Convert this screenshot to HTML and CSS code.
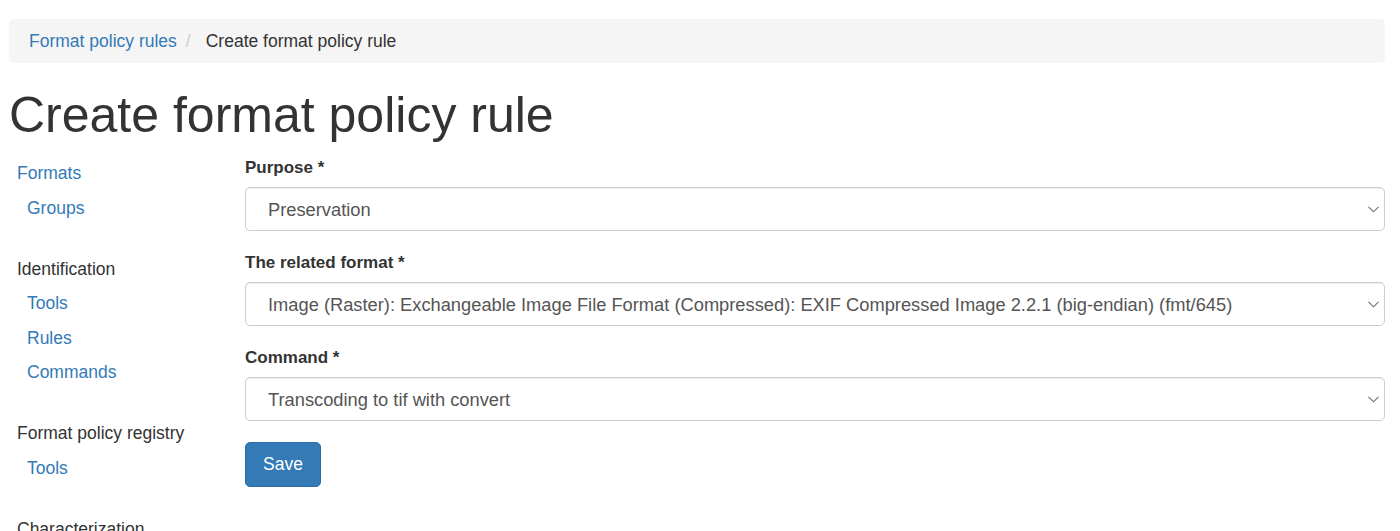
FILE: index.html
```html
<!DOCTYPE html>
<html lang="en">
<head>
<meta charset="utf-8">
<title>Create format policy rule</title>
<link rel="stylesheet" href="styles.css">
</head>
<body>
<div class="page">
  <nav class="breadcrumb">
    <a href="#" class="crumb-link">Format policy rules</a><span class="crumb-sep">/</span><span class="crumb-active">Create format policy rule</span>
  </nav>
  <h1 class="title">Create format policy rule</h1>
  <div class="layout">
    <aside class="sidebar">
      <ul class="nav">
        <li class="nav-group">
          <a href="#" class="nav-top nav-link">Formats</a>
          <ul class="nav-sub">
            <li><a href="#" class="nav-link">Groups</a></li>
          </ul>
        </li>
        <li class="nav-group">
          <span class="nav-top">Identification</span>
          <ul class="nav-sub">
            <li><a href="#" class="nav-link">Tools</a></li>
            <li><a href="#" class="nav-link">Rules</a></li>
            <li><a href="#" class="nav-link">Commands</a></li>
          </ul>
        </li>
        <li class="nav-group">
          <span class="nav-top">Format policy registry</span>
          <ul class="nav-sub">
            <li><a href="#" class="nav-link">Tools</a></li>
          </ul>
        </li>
        <li class="nav-group">
          <span class="nav-top">Characterization</span>
        </li>
      </ul>
    </aside>
    <form class="form">
      <div class="form-group">
        <label class="label" for="purpose">Purpose *</label>
        <div class="select-wrap">
          <select id="purpose" class="select">
            <option>Preservation</option>
          </select>
          <svg class="chevron" width="11" height="7" viewBox="0 0 11 7"><path d="M0.5 0.8 L5.5 5.8 L10.5 0.8" fill="none" stroke="#6f6f6f" stroke-width="1.1"/></svg>
        </div>
      </div>
      <div class="form-group">
        <label class="label" for="format">The related format *</label>
        <div class="select-wrap">
          <select id="format" class="select">
            <option>Image (Raster): Exchangeable Image File Format (Compressed): EXIF Compressed Image 2.2.1 (big-endian) (fmt/645)</option>
          </select>
          <svg class="chevron" width="11" height="7" viewBox="0 0 11 7"><path d="M0.5 0.8 L5.5 5.8 L10.5 0.8" fill="none" stroke="#6f6f6f" stroke-width="1.1"/></svg>
        </div>
      </div>
      <div class="form-group">
        <label class="label" for="command">Command *</label>
        <div class="select-wrap">
          <select id="command" class="select">
            <option>Transcoding to tif with convert</option>
          </select>
          <svg class="chevron" width="11" height="7" viewBox="0 0 11 7"><path d="M0.5 0.8 L5.5 5.8 L10.5 0.8" fill="none" stroke="#6f6f6f" stroke-width="1.1"/></svg>
        </div>
      </div>
      <div class="actions">
        <button type="button" class="btn-primary">Save</button>
      </div>
    </form>
  </div>
</div>
</body>
</html>
```

FILE: styles.css
```css
html, body {
  margin: 0;
  padding: 0;
  background: #ffffff;
}

body {
  font-family: "Liberation Sans", Arial, Helvetica, sans-serif;
  font-size: 17.5px;
  line-height: 1.42857;
  color: #333333;
  overflow: hidden;
}

.page {
  padding: 19px 15px 0 9px;
}

.breadcrumb {
  display: flex;
  align-items: center;
  height: 44px;
  padding: 0 20px;
  background: #f5f5f5;
  border-radius: 5px;
}

.crumb-link {
  color: #337ab7;
  text-decoration: none;
}

.crumb-sep {
  color: #cccccc;
  margin: 0 15px 0 9px;
}

.crumb-active {
  color: #333333;
}

.title {
  margin: 25px 0 13px 0;
  font-size: 50px;
  line-height: 1.1;
  font-weight: 400;
  color: #333333;
  letter-spacing: 0;
}

.layout {
  display: grid;
  grid-template-columns: 236px 1fr;
}

.sidebar {
  padding-left: 8px;
}

.nav, .nav-sub {
  list-style: none;
  margin: 0;
  padding: 0;
}

.nav-group {
  margin-bottom: 26.5px;
}

.nav-top {
  display: block;
  line-height: 34.5px;
  color: #333333;
}

.nav-sub li {
  line-height: 34.5px;
  padding-left: 10px;
}

.nav-link {
  color: #337ab7;
  text-decoration: none;
}

.form-group {
  margin-bottom: 20px;
}

.label {
  display: block;
  font-weight: 700;
  font-size: 17px;
  line-height: 24px;
  margin-bottom: 7px;
  color: #333333;
}

.select-wrap {
  position: relative;
}

.select {
  display: block;
  width: 100%;
  height: 44px;
  margin: 0;
  padding: 1px 40px 0 22px;
  font-family: inherit;
  font-size: 18.3px;
  color: #555555;
  background: #ffffff;
  border: 1px solid #cccccc;
  border-radius: 5px;
  box-shadow: inset 0 1px 1px rgba(0, 0, 0, 0.075);
  -webkit-appearance: none;
  appearance: none;
  outline: none;
}

.chevron {
  position: absolute;
  right: 6px;
  top: 19px;
  pointer-events: none;
}

.actions {
  display: flex;
  padding-top: 1px;
}

.btn-primary {
  height: 45px;
  padding: 0 17px;
  font-family: inherit;
  font-size: 17.5px;
  color: #ffffff;
  background: #337ab7;
  border: 1px solid #2e6da4;
  border-radius: 5px;
  cursor: pointer;
}
```
